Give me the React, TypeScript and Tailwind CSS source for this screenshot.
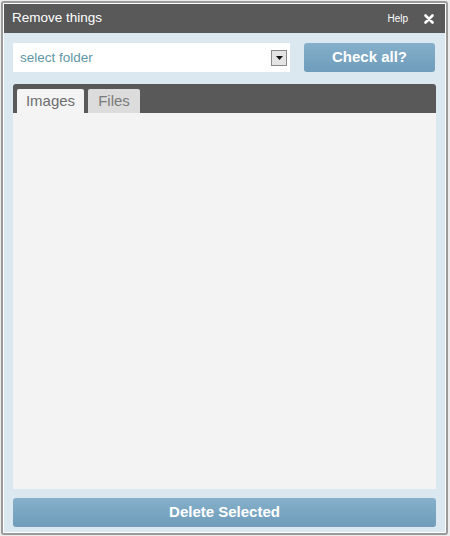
import { useState } from 'react';

export default function App() {
    const [tab, setTab] = useState<'images' | 'files'>('images');

    return (
        <div className="w-[450px] h-[536px] bg-[#ececec] pl-[1px] pt-[1px]" style={{ fontFamily: '"Liberation Sans", Arial, sans-serif' }}>
            <div className="w-[447px] h-[534px] border-2 border-[#9a9a9a] rounded-[3px] bg-white p-[1px]">
                <div className="flex flex-col h-full bg-[#dbe8ef]">
                    {/* header */}
                    <div className="flex items-center h-[29px] bg-[#595959] px-[8px] shrink-0">
                        <span className="text-white text-[13.5px] flex-1">Remove things</span>
                        <span className="text-white text-[10px] mr-[16px]">Help</span>
                        <svg width="10" height="10" viewBox="0 0 10 10" className="mr-[3px]">
                            <path d="M1.5 1.5 L8.5 8.5 M8.5 1.5 L1.5 8.5" stroke="#fff" strokeWidth="2.6" strokeLinecap="round" />
                        </svg>
                    </div>

                    <div className="flex flex-col flex-1 px-[9px] pt-[10px] pb-[5px]">
                        {/* folder select + check all */}
                        <div className="flex items-center h-[29px]">
                            <div className="flex items-center w-[277px] h-full bg-white px-[7px]">
                                <span className="flex-1 text-[13.5px] text-[#5f97a6] pt-[1px]">select folder</span>
                                <div className="flex items-center justify-center w-[16px] h-[16px] border border-[#8a8a8a] bg-[#e4e4e4] mr-[-4px]">
                                    <svg width="7" height="4" viewBox="0 0 7 4">
                                        <path d="M0 0 L7 0 L3.5 4 Z" fill="#111" />
                                    </svg>
                                </div>
                            </div>
                            <button className="ml-auto w-[131px] h-full rounded-[3px] bg-gradient-to-b from-[#86b0cb] to-[#6e9cba] text-white font-bold text-[15px] mr-[1px]">
                                Check all?
                            </button>
                        </div>

                        {/* tabs */}
                        <div className="flex flex-col flex-1 mt-[12px]">
                            <div className="flex items-end gap-[4px] h-[29px] bg-[#595959] rounded-t-[3px] px-[4px]">
                                <button
                                    onClick={() => setTab('images')}
                                    className={`h-[24px] w-[67px] rounded-t-[2px] text-[15px] ${tab === 'images' ? 'bg-[#f4f4f4] text-[#6d6d6d]' : 'bg-[#dcdcdc] text-[#7a7a7a]'}`}
                                >
                                    Images
                                </button>
                                <button
                                    onClick={() => setTab('files')}
                                    className={`h-[24px] w-[52px] rounded-t-[2px] text-[15px] ${tab === 'files' ? 'bg-[#f4f4f4] text-[#6d6d6d]' : 'bg-[#dcdcdc] text-[#7a7a7a]'}`}
                                >
                                    Files
                                </button>
                            </div>
                            <div className="flex-1 bg-[#f3f3f3]"></div>
                        </div>

                        <button className="mt-[9px] h-[29px] w-full rounded-[3px] bg-gradient-to-b from-[#86b0cb] to-[#6e9cba] text-white font-bold text-[15px]">
                            Delete Selected
                        </button>
                    </div>
                </div>
            </div>
        </div>
    );
}
